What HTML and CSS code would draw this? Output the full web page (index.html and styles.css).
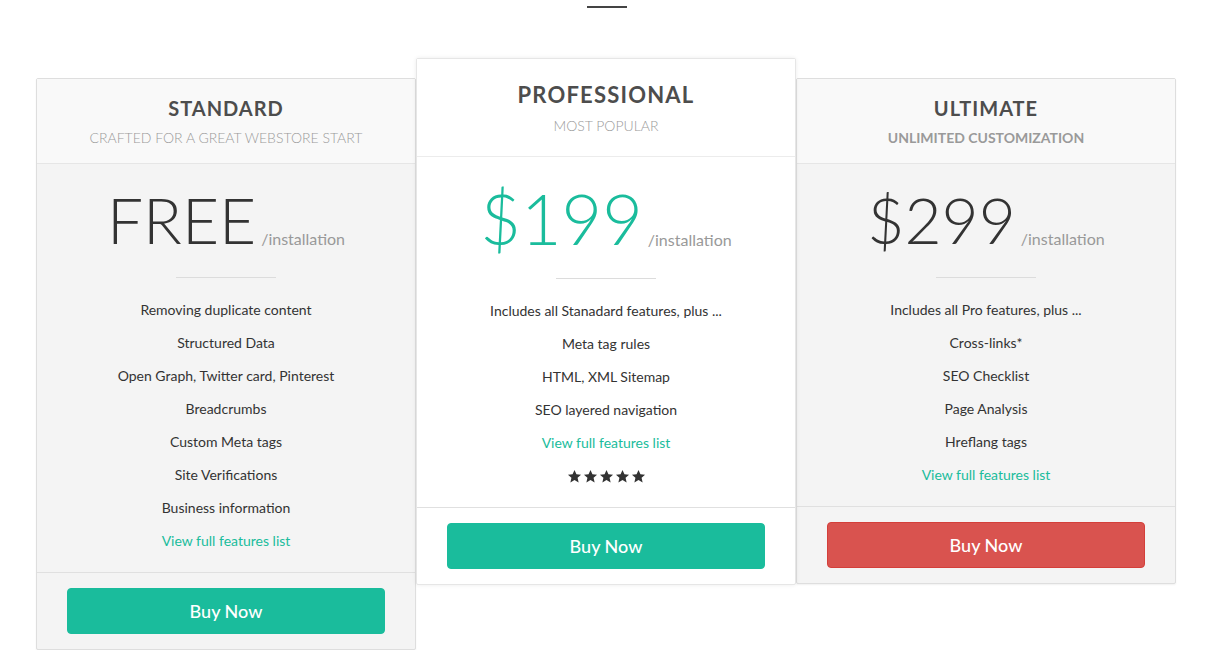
FILE: index.html
```html
<!DOCTYPE html>
<html lang="en">
<head>
<meta charset="utf-8">
<title>Pricing</title>
<link rel="stylesheet" href="styles.css">
</head>
<body>
<div class="rule"></div>
<div class="plans">
  <div class="plan plan-side">
    <div class="plan-head">
      <h3 class="plan-title">STANDARD</h3>
      <div class="plan-sub">CRAFTED FOR A GREAT WEBSTORE START</div>
    </div>
    <div class="plan-body">
      <div class="price"><span class="amount">FREE</span><span class="per">/installation</span></div>
      <div class="divider"></div>
      <ul class="features">
        <li>Removing duplicate content</li>
        <li>Structured Data</li>
        <li>Open Graph, Twitter card, Pinterest</li>
        <li>Breadcrumbs</li>
        <li>Custom Meta tags</li>
        <li>Site Verifications</li>
        <li>Business information</li>
        <li><a class="link" href="#">View full features list</a></li>
      </ul>
    </div>
    <div class="plan-foot"><a class="btn btn-green" href="#">Buy Now</a></div>
  </div>

  <div class="plan plan-main">
    <div class="plan-head">
      <h3 class="plan-title">PROFESSIONAL</h3>
      <div class="plan-sub">MOST POPULAR</div>
    </div>
    <div class="plan-body">
      <div class="price"><span class="amount">$199</span><span class="per">/installation</span></div>
      <div class="divider"></div>
      <ul class="features">
        <li>Includes all Stanadard features, plus ...</li>
        <li>Meta tag rules</li>
        <li>HTML, XML Sitemap</li>
        <li>SEO layered navigation</li>
        <li><a class="link" href="#">View full features list</a></li>
        <li class="stars">
          <svg viewBox="0 0 24 24"><path d="M12 1.5l3.1 6.9 7.4.7-5.6 5 1.7 7.4L12 17.6l-6.6 3.9 1.7-7.4-5.6-5 7.4-.7z"/></svg>
          <svg viewBox="0 0 24 24"><path d="M12 1.5l3.1 6.9 7.4.7-5.6 5 1.7 7.4L12 17.6l-6.6 3.9 1.7-7.4-5.6-5 7.4-.7z"/></svg>
          <svg viewBox="0 0 24 24"><path d="M12 1.5l3.1 6.9 7.4.7-5.6 5 1.7 7.4L12 17.6l-6.6 3.9 1.7-7.4-5.6-5 7.4-.7z"/></svg>
          <svg viewBox="0 0 24 24"><path d="M12 1.5l3.1 6.9 7.4.7-5.6 5 1.7 7.4L12 17.6l-6.6 3.9 1.7-7.4-5.6-5 7.4-.7z"/></svg>
          <svg viewBox="0 0 24 24"><path d="M12 1.5l3.1 6.9 7.4.7-5.6 5 1.7 7.4L12 17.6l-6.6 3.9 1.7-7.4-5.6-5 7.4-.7z"/></svg>
        </li>
      </ul>
    </div>
    <div class="plan-foot"><a class="btn btn-green" href="#">Buy Now</a></div>
  </div>

  <div class="plan plan-side">
    <div class="plan-head">
      <h3 class="plan-title">ULTIMATE</h3>
      <div class="plan-sub plan-sub-bold">UNLIMITED CUSTOMIZATION</div>
    </div>
    <div class="plan-body">
      <div class="price"><span class="amount">$299</span><span class="per">/installation</span></div>
      <div class="divider"></div>
      <ul class="features">
        <li>Includes all Pro features, plus ...</li>
        <li>Cross-links*</li>
        <li>SEO Checklist</li>
        <li>Page Analysis</li>
        <li>Hreflang tags</li>
        <li><a class="link" href="#">View full features list</a></li>
      </ul>
    </div>
    <div class="plan-foot"><a class="btn btn-red" href="#">Buy Now</a></div>
  </div>
</div>
</body>
</html>
```
FILE: styles.css
```css
* { box-sizing: border-box; }

body {
  margin: 0;
  background: #fff;
  font-family: Lato, "Open Sans", "Liberation Sans", sans-serif;
  color: #333;
}

.rule {
  width: 40px;
  height: 2px;
  background: #444;
  margin: 6px auto 0;
}

.plans {
  display: flex;
  align-items: flex-start;
  width: 1140px;
  margin: 50px 0 0 calc(50% - 571px);
}

.plan {
  width: 380px;
  flex: 0 0 380px;
  border: 1px solid #dedede;
  border-radius: 2px;
  background: #f4f4f4;
  box-shadow: 0 1px 2px rgba(0, 0, 0, 0.06);
  text-align: center;
}

.plan-side { margin-top: 20px; }

.plan-main {
  position: relative;
  z-index: 1;
  background: #fff;
  border-color: #e6e6e6;
  box-shadow: 0 0 4px rgba(0, 0, 0, 0.08);
}

.plan-head {
  background: #f9f9f9;
  border-bottom: 1px solid #e6e6e6;
  padding: 18px 10px 15px;
}

.plan-main .plan-head {
  background: #fff;
  border-bottom-color: #ececec;
  padding: 24px 10px 20px;
}

.plan-title {
  margin: 0;
  font-size: 20px;
  line-height: 22px;
  font-weight: 700;
  letter-spacing: 1px;
  color: #4d4d4d;
}

.plan-main .plan-title {
  font-size: 22px;
  line-height: 24px;
  letter-spacing: 1.2px;
}

.plan-sub {
  margin-top: 9px;
  font-size: 14px;
  line-height: 20px;
  font-weight: 300;
  color: #9a9a9a;
}

.plan-sub-bold {
  font-weight: 700;
  color: #9a9a9a;
}

.plan-body {
  padding: 24px 0 21px;
}

.plan-main .plan-body { padding-top: 26px; }

.price {
  font-size: 64px;
  line-height: 64px;
  font-weight: 300;
  color: #333;
}

.plan-main .price {
  font-size: 70px;
  line-height: 70px;
  color: #1abc9c;
}

.per {
  margin-left: 5px;
  font-size: 16px;
  line-height: 16px;
  font-weight: 400;
  color: #999;
  position: relative;
  top: 1px;
}

.divider {
  width: 100px;
  height: 1px;
  background: #dcdcdc;
  margin: 25px auto 0;
}

.features {
  list-style: none;
  margin: 22px 0 0;
  padding: 0;
}

.features li {
  font-size: 14px;
  line-height: 20px;
  color: #333;
  margin-bottom: 13px;
}

.features li:last-child { margin-bottom: 0; }

.link {
  color: #1abc9c;
  text-decoration: none;
}

.stars {
  display: flex;
  justify-content: center;
  align-items: center;
  gap: 1px;
  height: 20px;
}

.stars svg {
  width: 15px;
  height: 15px;
  fill: #333;
}

.plan-foot {
  border-top: 1px solid #e0e0e0;
  padding: 15px 30px;
}

.btn {
  display: block;
  height: 46px;
  line-height: 44px;
  border: 1px solid transparent;
  border-radius: 4px;
  font-size: 18px;
  font-weight: 500;
  color: #fff;
  text-decoration: none;
}

.btn-green {
  background: #1abc9c;
  border-color: #1abc9c;
}

.btn-red {
  background: #d9534f;
  border-color: #d43f3a;
}
```
